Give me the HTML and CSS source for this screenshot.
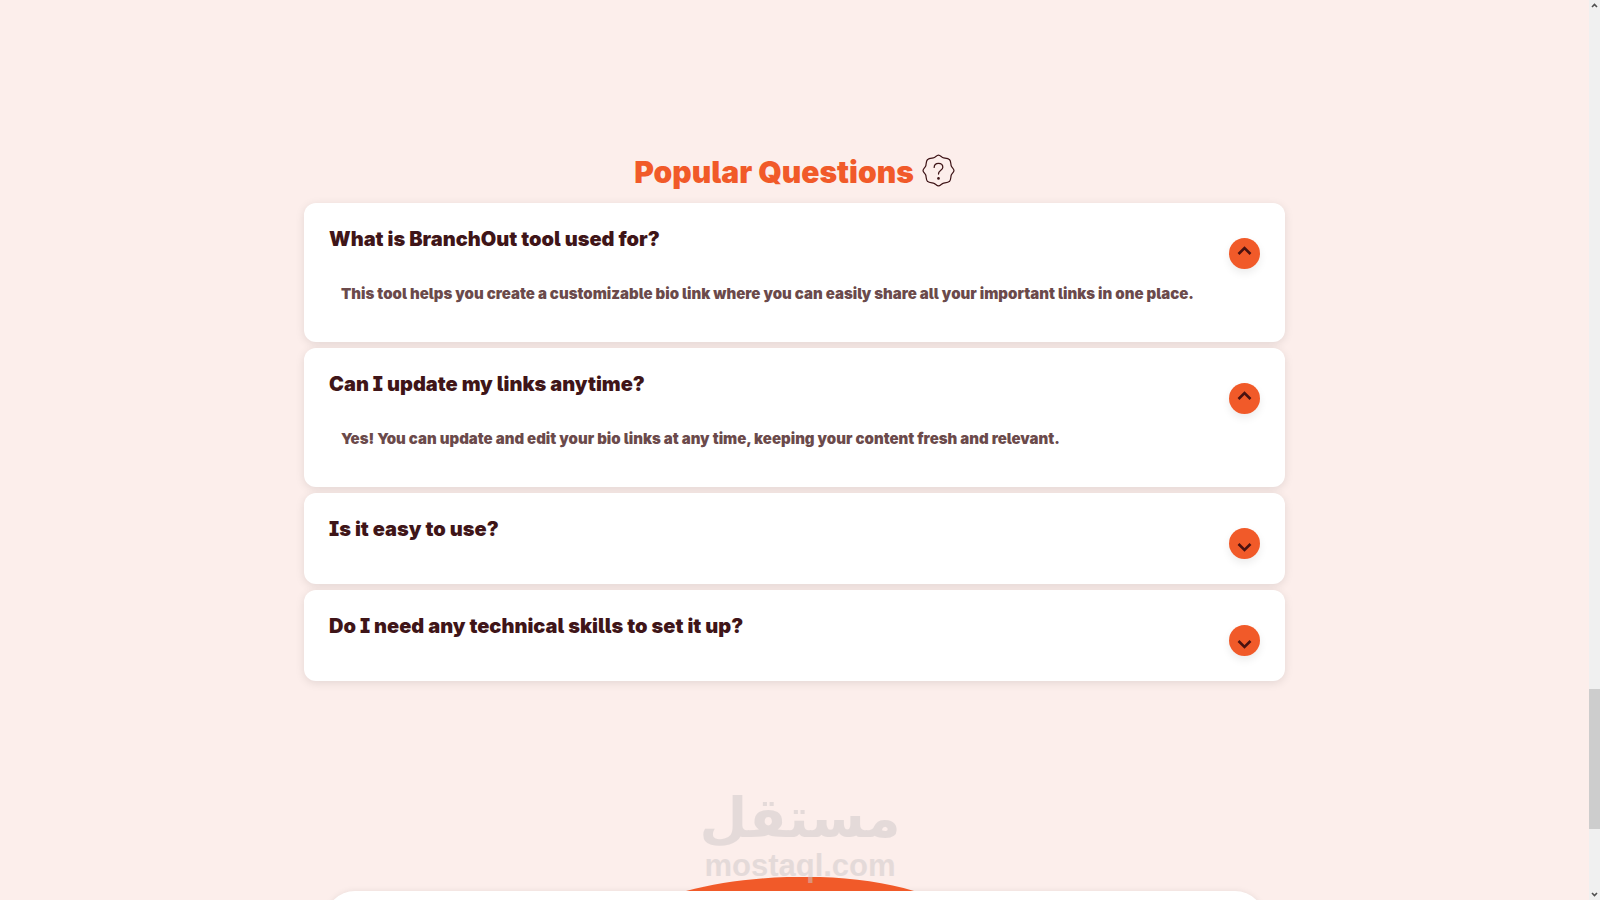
FILE: index.html
```html
<!DOCTYPE html>
<html lang="en">
<head>
<meta charset="utf-8">
<title>Popular Questions</title>
<link rel="stylesheet" href="styles.css">
</head>
<body>
<div class="page">
  <main class="content">
    <section class="faq">
      <h2 class="faq-title">Popular Questions
        <svg class="badge" viewBox="0 0 32 32" aria-hidden="true">
          <path d="M16 1C18 1 19 3.5 21 3.8C23 4.1 25.3 4 26.6 5.4C28 6.7 27.9 9 28.2 11C28.5 13 31 14 31 16C31 18 28.5 19 28.2 21C27.9 23 28 25.3 26.6 26.6C25.3 28 23 27.9 21 28.2C19 28.5 18 31 16 31C14 31 13 28.5 11 28.2C9 27.9 6.7 28 5.4 26.6C4 25.3 4.1 23 3.8 21C3.5 19 1 18 1 16C1 14 3.5 13 3.8 11C4.1 9 4 6.7 5.4 5.4C6.7 4 9 4.1 11 3.8C13 3.5 14 1 16 1Z"/>
          <path d="M11.8 13C11.8 10.5 13.6 9 16 9C18.4 9 20.2 10.6 20.2 12.9C20.2 16 16 15.8 16 19.5"/>
          <circle class="badge-dot" cx="16" cy="23.7" r="1.3"/>
        </svg>
      </h2>
      <div class="faq-list">
        <article class="card">
          <div class="card-text">
            <h3 class="question" id="q1">What is BranchOut tool used for?</h3>
            <p class="answer">This tool helps you create a customizable bio link where you can easily share all your important links in one place.</p>
          </div>
          <button class="toggle" type="button" aria-labelledby="q1" aria-expanded="true"><svg viewBox="0 0 31 31"><path d="M9.5 16L15.5 10L21.5 16"/></svg></button>
        </article>
        <article class="card">
          <div class="card-text">
            <h3 class="question" id="q2">Can I update my links anytime?</h3>
            <p class="answer">Yes! You can update and edit your bio links at any time, keeping your content fresh and relevant.</p>
          </div>
          <button class="toggle" type="button" aria-labelledby="q2" aria-expanded="true"><svg viewBox="0 0 31 31"><path d="M9.5 16L15.5 10L21.5 16"/></svg></button>
        </article>
        <article class="card">
          <div class="card-text">
            <h3 class="question" id="q3">Is it easy to use?</h3>
          </div>
          <button class="toggle" type="button" aria-labelledby="q3" aria-expanded="false"><svg viewBox="0 0 31 31"><path d="M9.5 16L15.5 22L21.5 16"/></svg></button>
        </article>
        <article class="card">
          <div class="card-text">
            <h3 class="question" id="q4">Do I need any technical skills to set it up?</h3>
          </div>
          <button class="toggle" type="button" aria-labelledby="q4" aria-expanded="false"><svg viewBox="0 0 31 31"><path d="M9.5 16L15.5 22L21.5 16"/></svg></button>
        </article>
      </div>
    </section>
    <section class="next">
      <svg class="blob" viewBox="0 0 240 14" aria-hidden="true"><path d="M11 14C77 -4 174 -6 239 14Z"/></svg>
      <div class="panel"></div>
    </section>
  </main>
  <div class="scrollbar" aria-hidden="true">
    <svg class="arrow" viewBox="0 0 11 11"><path d="M3 7L5.5 4.5L8 7"/></svg>
    <div class="track-before"></div>
    <div class="thumb"></div>
    <div class="track-after"></div>
    <svg class="arrow" viewBox="0 0 11 11"><path d="M3 4L5.5 6.5L8 4"/></svg>
  </div>
  <div class="watermark">
    <span class="mark-arabic" lang="ar" dir="rtl">مستقل</span>
    <span class="mark-latin">mostaql.com</span>
  </div>
</div>
</body>
</html>
```

FILE: styles.css
```css
* { box-sizing: border-box; }

body {
  margin: 0;
  background: #fceeeb;
  color: #3f1518;
  font-family: Inter, "Liberation Sans", sans-serif;
  font-feature-settings: "cv05", "cv08";
}

.page {
  position: relative;
  display: flex;
  height: 100vh;
  overflow: hidden;
}

.content { flex: 1; min-width: 0; }

.faq {
  max-width: 981px;
  margin: 0 auto;
  padding-top: 154px;
}

.faq-title {
  display: flex;
  align-items: flex-start;
  justify-content: center;
  gap: 8px;
  margin: 0 0 13px;
  color: #f15a29;
  font-size: 30px;
  font-weight: 900;
  line-height: 36px;
}

.badge {
  width: 33px;
  height: 33px;
  fill: none;
  stroke: #3f1518;
  stroke-width: 1.2;
  stroke-linecap: round;
}

.badge-dot { fill: #3f1518; stroke: none; }

.faq-list { display: grid; gap: 6px; }

.card {
  display: flex;
  justify-content: space-between;
  align-items: flex-start;
  padding: 25px;
  background: #fff;
  border-radius: 12px;
  box-shadow: 0 2px 10px rgba(0, 0, 0, 0.1);
}

.question {
  margin: 0;
  font-size: 20px;
  font-weight: 900;
  line-height: 22px;
}

.answer {
  margin: 20px 0 0;
  padding: 12px 12px 11px;
  color: #6b4a4b;
  font-size: 15px;
  font-weight: 900;
  line-height: 24px;
}

.toggle {
  flex: none;
  width: 31px;
  height: 31px;
  margin-top: 10px;
  padding: 0;
  border: 0;
  border-radius: 50%;
  background: #f15a29;
  box-shadow: 0 4px 8px rgba(0, 0, 0, 0.08);
}

.toggle svg {
  display: block;
  fill: none;
  stroke: #4a1210;
  stroke-width: 2.6;
}

.next { margin-top: 196px; padding: 0 24px; }

.blob {
  display: block;
  width: 240px;
  height: 14px;
  margin: 0 auto;
  fill: #f15a29;
}

.panel {
  max-width: 940px;
  height: 200px;
  margin: 0 auto;
  background: #fff;
  border-radius: 30px;
  box-shadow: 0 0 6px rgba(0, 0, 0, 0.08);
}

.scrollbar {
  display: flex;
  flex-direction: column;
  flex: none;
  width: 11px;
  background: #f0f0f0;
}

.arrow {
  width: 11px;
  height: 11px;
  fill: none;
  stroke: #505050;
  stroke-width: 1.6;
}

.track-before { flex: 678; }
.thumb { flex: 140; background: #cdcdcd; }
.track-after { flex: 60; }

.watermark {
  position: absolute;
  bottom: 16px;
  left: 0;
  right: 0;
  display: flex;
  flex-direction: column;
  align-items: center;
  color: #cec8c9;
  font-weight: 700;
  opacity: 0.5;
}

.mark-arabic {
  font-family: "DejaVu Sans", sans-serif;
  font-size: 55px;
  line-height: 60px;
}

.mark-latin {
  font-family: "Liberation Sans", sans-serif;
  font-size: 31px;
  line-height: 36px;
}
```
